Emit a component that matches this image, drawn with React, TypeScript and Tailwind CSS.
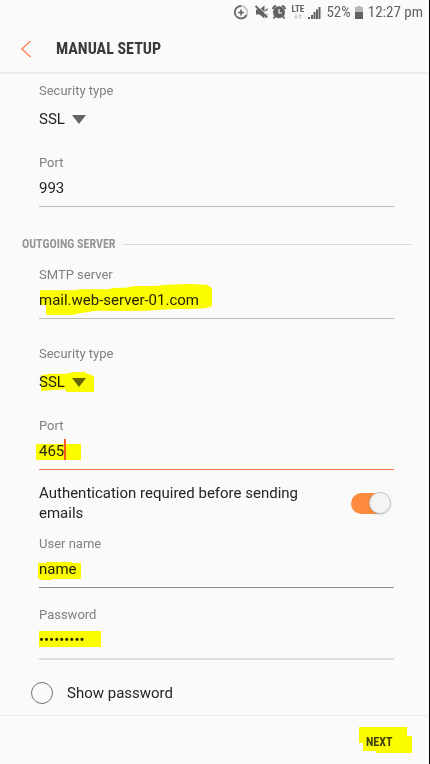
import { useState } from 'react';
import type { ReactNode } from 'react';
import clsx from 'clsx';

const condensed = "font-['Roboto_Condensed','Liberation_Sans_Narrow',Roboto,sans-serif]";

const StatusBar = () => (
  <div className="flex h-6 items-center justify-end pr-[6px] text-[#626262]">
    <svg width="14" height="15" viewBox="0 0 14 15" fill="none" stroke="currentColor" aria-hidden="true">
      <path d="M7 1A6.2 6.2 0 1 0 12.6 10" strokeWidth="1.8" />
      <path d="M7 1A6.2 6.2 0 0 1 12.6 10" strokeWidth="1.8" stroke="#c8c8c8" />
      <path d="M7 4.500v6M4 7.500h6" strokeWidth="1.6" />
    </svg>
    <svg className="ml-[7px]" width="13" height="14" viewBox="0 0 13 14" fill="currentColor" aria-hidden="true">
      <path d="M1 4.500h3.500L9.500.5V13.500L4.500 9.500H1z" />
      <path d="M10.200 5 12.600 3v2.200l-2.400 1.300zM10.200 8.500l2.400.5v1.800l-2.400-.8z" />
      <path d="M2.400.6 13 11.200" stroke="#fafafa" strokeWidth="1" />
      <path d="M.6 1 12.200 12.600" stroke="currentColor" strokeWidth="1.900" />
    </svg>
    <svg className="ml-[4px]" width="14" height="14" viewBox="0 0 14 14" fill="currentColor" aria-hidden="true">
      <circle cx="7" cy="7.300" r="6" />
      <path d="M.8 4.200A4 4 0 0 1 4.200.8M13.200 4.200A4 4 0 0 0 9.800.8" fill="none" stroke="currentColor" strokeWidth="2" />
      <path d="M3 11.500 1.500 13.500M11 11.500l1.500 2" stroke="currentColor" strokeWidth="1.800" />
      <path d="M7 4v4h3" fill="none" stroke="#fafafa" strokeWidth="1.200" />
    </svg>
    <div className="ml-[4px] flex w-[15px] flex-col items-center">
      <span className={clsx(condensed, 'text-[9px] leading-[9px] font-bold')}>LTE</span>
      <svg width="8" height="5" viewBox="0 0 8 5" fill="none" stroke="#b5b5b5" aria-hidden="true">
        <path d="M2 0v4M.5 2.800 2 4.300l1.500-1.500M6 5V1M4.500 2.200 6 .7l1.500 1.500" />
      </svg>
    </div>
    <svg className="ml-[3px]" width="13" height="13" viewBox="0 0 13 13" fill="currentColor" aria-hidden="true">
      <path d="M0 11h2v2H0zM3 9h2v4H3zM5.500 6h2v7h-2zM8 3.500h2V13H8zM10.500 1h2v12h-2z" />
    </svg>
    <span className={clsx(condensed, 'ml-[5px] text-[15px] leading-6')}>52%</span>
    <svg className="ml-1" width="8" height="13" viewBox="0 0 8 13" aria-hidden="true">
      <path d="M2 0h4v1h2v5H0V1h2z" fill="#b9b9b9" />
      <path d="M0 6h8v7H0z" fill="currentColor" />
    </svg>
    <span className={clsx(condensed, 'ml-[5px] text-[15px] leading-6')}>12:27 pm</span>
  </div>
);

interface FieldProps {
  id: string;
  label: string;
  value: string;
  onChange: (value: string) => void;
  type?: string;
  line?: string;
  className?: string;
  children?: ReactNode;
}

const Field = ({ id, label, value, onChange, type = 'text', line = 'border-b border-[#bdbdbd]', className, children }: FieldProps) => (
  <div className={className}>
    <label htmlFor={id} className="block text-[13px] leading-[22px] text-[#808080]">{label}</label>
    <div className={clsx('relative pb-[4px]', line)}>
      {children}
      <input
        id={id}
        type={type}
        value={value}
        onChange={(e) => onChange(e.target.value)}
        className="relative block h-7 w-full bg-transparent text-[15px] text-[#252525] mix-blend-multiply outline-none"
      />
    </div>
  </div>
);

const SecurityField = ({ id, className, children }: { id: string; className?: string; children?: ReactNode }) => (
  <div className={className}>
    <label htmlFor={id} className="block text-[13px] leading-5 text-[#808080]">Security type</label>
    <div className="relative mt-[3px] flex h-[30px] items-center">
      {children}
      <select
        id={id}
        defaultValue="SSL"
        className="relative h-[30px] w-[33px] appearance-none bg-transparent text-[15px] text-[#252525] mix-blend-multiply outline-none"
      >
        <option>SSL</option>
        <option>TLS</option>
        <option>None</option>
      </select>
      <svg className="pointer-events-none relative mix-blend-multiply" width="14" height="9" viewBox="0 0 14 9" fill="#666" aria-hidden="true">
        <path d="M0 0h14L7 9z" />
      </svg>
    </div>
  </div>
);

export default function App() {
  const [incomingPort, setIncomingPort] = useState('993');
  const [server, setServer] = useState('mail.web-server-01.com');
  const [port, setPort] = useState('465');
  const [user, setUser] = useState('name');
  const [password, setPassword] = useState('password1');
  const [auth, setAuth] = useState(true);
  const [show, setShow] = useState(false);

  return (
    <div className="flex min-h-screen flex-col border-r border-black bg-[#fafafa] font-[Roboto,sans-serif]">
      <header className="border-b-2 border-[#ededed]">
        <StatusBar />
        <div className="flex h-12 items-center pt-px pl-5">
          <button type="button" aria-label="Back" className="w-9">
            <svg width="12" height="18" viewBox="0 0 12 18" fill="none" stroke="#ff8a65" strokeWidth="1.600" aria-hidden="true">
              <path d="M10.500 1 2 9l8.500 8" />
            </svg>
          </button>
          <h1 className={clsx(condensed, 'pt-px text-base font-bold text-[#3a3a3a]')}>MANUAL SETUP</h1>
        </div>
      </header>

      <main className="grow pt-[7px] pr-[35px] pl-[39px]">
        <SecurityField id="incoming-security" />
        <Field id="incoming-port" label="Port" value={incomingPort} onChange={setIncomingPort} className="mt-[18px]" />

        <div className="mt-[27px] -mr-[17px] -ml-[17px] flex items-center gap-2">
          <h2 className={clsx(condensed, 'text-[12px] leading-5 font-bold text-[#969696]')}>OUTGOING SERVER</h2>
          <div className="h-px grow bg-[#dadada]" />
        </div>

        <Field id="smtp" label="SMTP server" value={server} onChange={setServer} className="mt-[10px]">
          <svg className="absolute -top-[2px] left-px" width="172" height="31" viewBox="120 72 516 93" fill="#fcfc00" aria-hidden="true">
            <path d="M120 91H225L240 88H330L335 84 375 83 405 78H465L500 74 570 72 620 74 630 80 636 84V138L625 143 600 146 505 148 440 152 360 153 290 152 268 155 240 160 215 165H138V135H120z" />
          </svg>
        </Field>
        <SecurityField id="outgoing-security" className="mt-[25px]">
          <svg className="absolute top-[5px] left-px" width="54" height="20" viewBox="120 336 162 60" fill="#fcfc00" aria-hidden="true">
            <path d="M123 346 150 341H200L218 337 255 336 258 340 275 345 282 350V396H200L195 388 150 391 123 393z" />
          </svg>
        </SecurityField>
        <Field id="outgoing-port" label="Port" value={port} onChange={setPort} line="border-b border-[#ff7043]" className="mt-[18px]">
          <span className="absolute top-[7px] -left-[3px] h-4 w-[45px] bg-[#fcfc00]" />
          <span className="absolute top-[2px] left-[25px] h-[21px] w-[2px] bg-[#ff5722]" />
        </Field>

        <div className="mt-[13px] flex items-center justify-between pr-[3px]">
          <label htmlFor="auth" className="max-w-[280px] text-[15px] leading-5 text-[#252525]">
            Authentication required before sending emails
          </label>
          <label className="relative flex h-[22px] w-10 items-center">
            <input
              id="auth"
              type="checkbox"
              role="switch"
              aria-label="Authentication required"
              checked={auth}
              onChange={(e) => setAuth(e.target.checked)}
              className="peer sr-only"
            />
            <span className="h-[21px] w-9 rounded-full bg-[#bdbdbd] peer-checked:bg-[#ff8b3e]" />
            <span className="absolute left-0 size-[22px] rounded-full border border-[#c4c4c4] bg-[#f4f4f4] shadow-sm peer-checked:left-[18px]" />
          </label>
        </div>

        <Field id="user" label="User name" value={user} onChange={setUser} line="border-b border-[#8c8c8c]" className="mt-[10px]">
          <svg className="absolute top-[7px] -left-px" width="43" height="18" viewBox="114 96 129 54" fill="#fcfc00" aria-hidden="true">
            <path d="M114 99H138V96H216V99H243V147H156V150H123V147H114z" />
          </svg>
        </Field>
        <Field
          id="password"
          label="Password"
          type={show ? 'text' : 'password'}
          value={password}
          onChange={setPassword}
          line="border-b-2 border-[#dedede]"
          className="mt-4"
        >
          <span className="absolute top-[5px] left-0 h-4 w-[62px] bg-[#fcfc00]" />
        </Field>

        <label className="mt-[21px] -ml-2 flex h-6 items-center gap-[14px] text-[15px] text-[#252525]">
          <input
            type="checkbox"
            checked={show}
            onChange={(e) => setShow(e.target.checked)}
            className="size-[22px] appearance-none rounded-full border border-[#757575] checked:bg-[#ff8b3e]"
          />
          Show password
        </label>
      </main>

      <footer className="mt-[10px] flex h-[49px] justify-end border-t border-[#ececec] pt-[11px] pr-[17px]">
        <button type="button" className={clsx(condensed, 'relative h-[26px] w-[53px] pt-[3px] pl-[7px] text-left text-[12px] font-bold text-[#3f3f00]')}>
          <svg className="absolute inset-0" width="53" height="26" viewBox="387 261 159 78" fill="#fcfc00" aria-hidden="true">
            <path d="M387 261H531V288H546V339H438V333H399V309H387z" />
          </svg>
          <span className="relative">NEXT</span>
        </button>
      </footer>
    </div>
  );
}
